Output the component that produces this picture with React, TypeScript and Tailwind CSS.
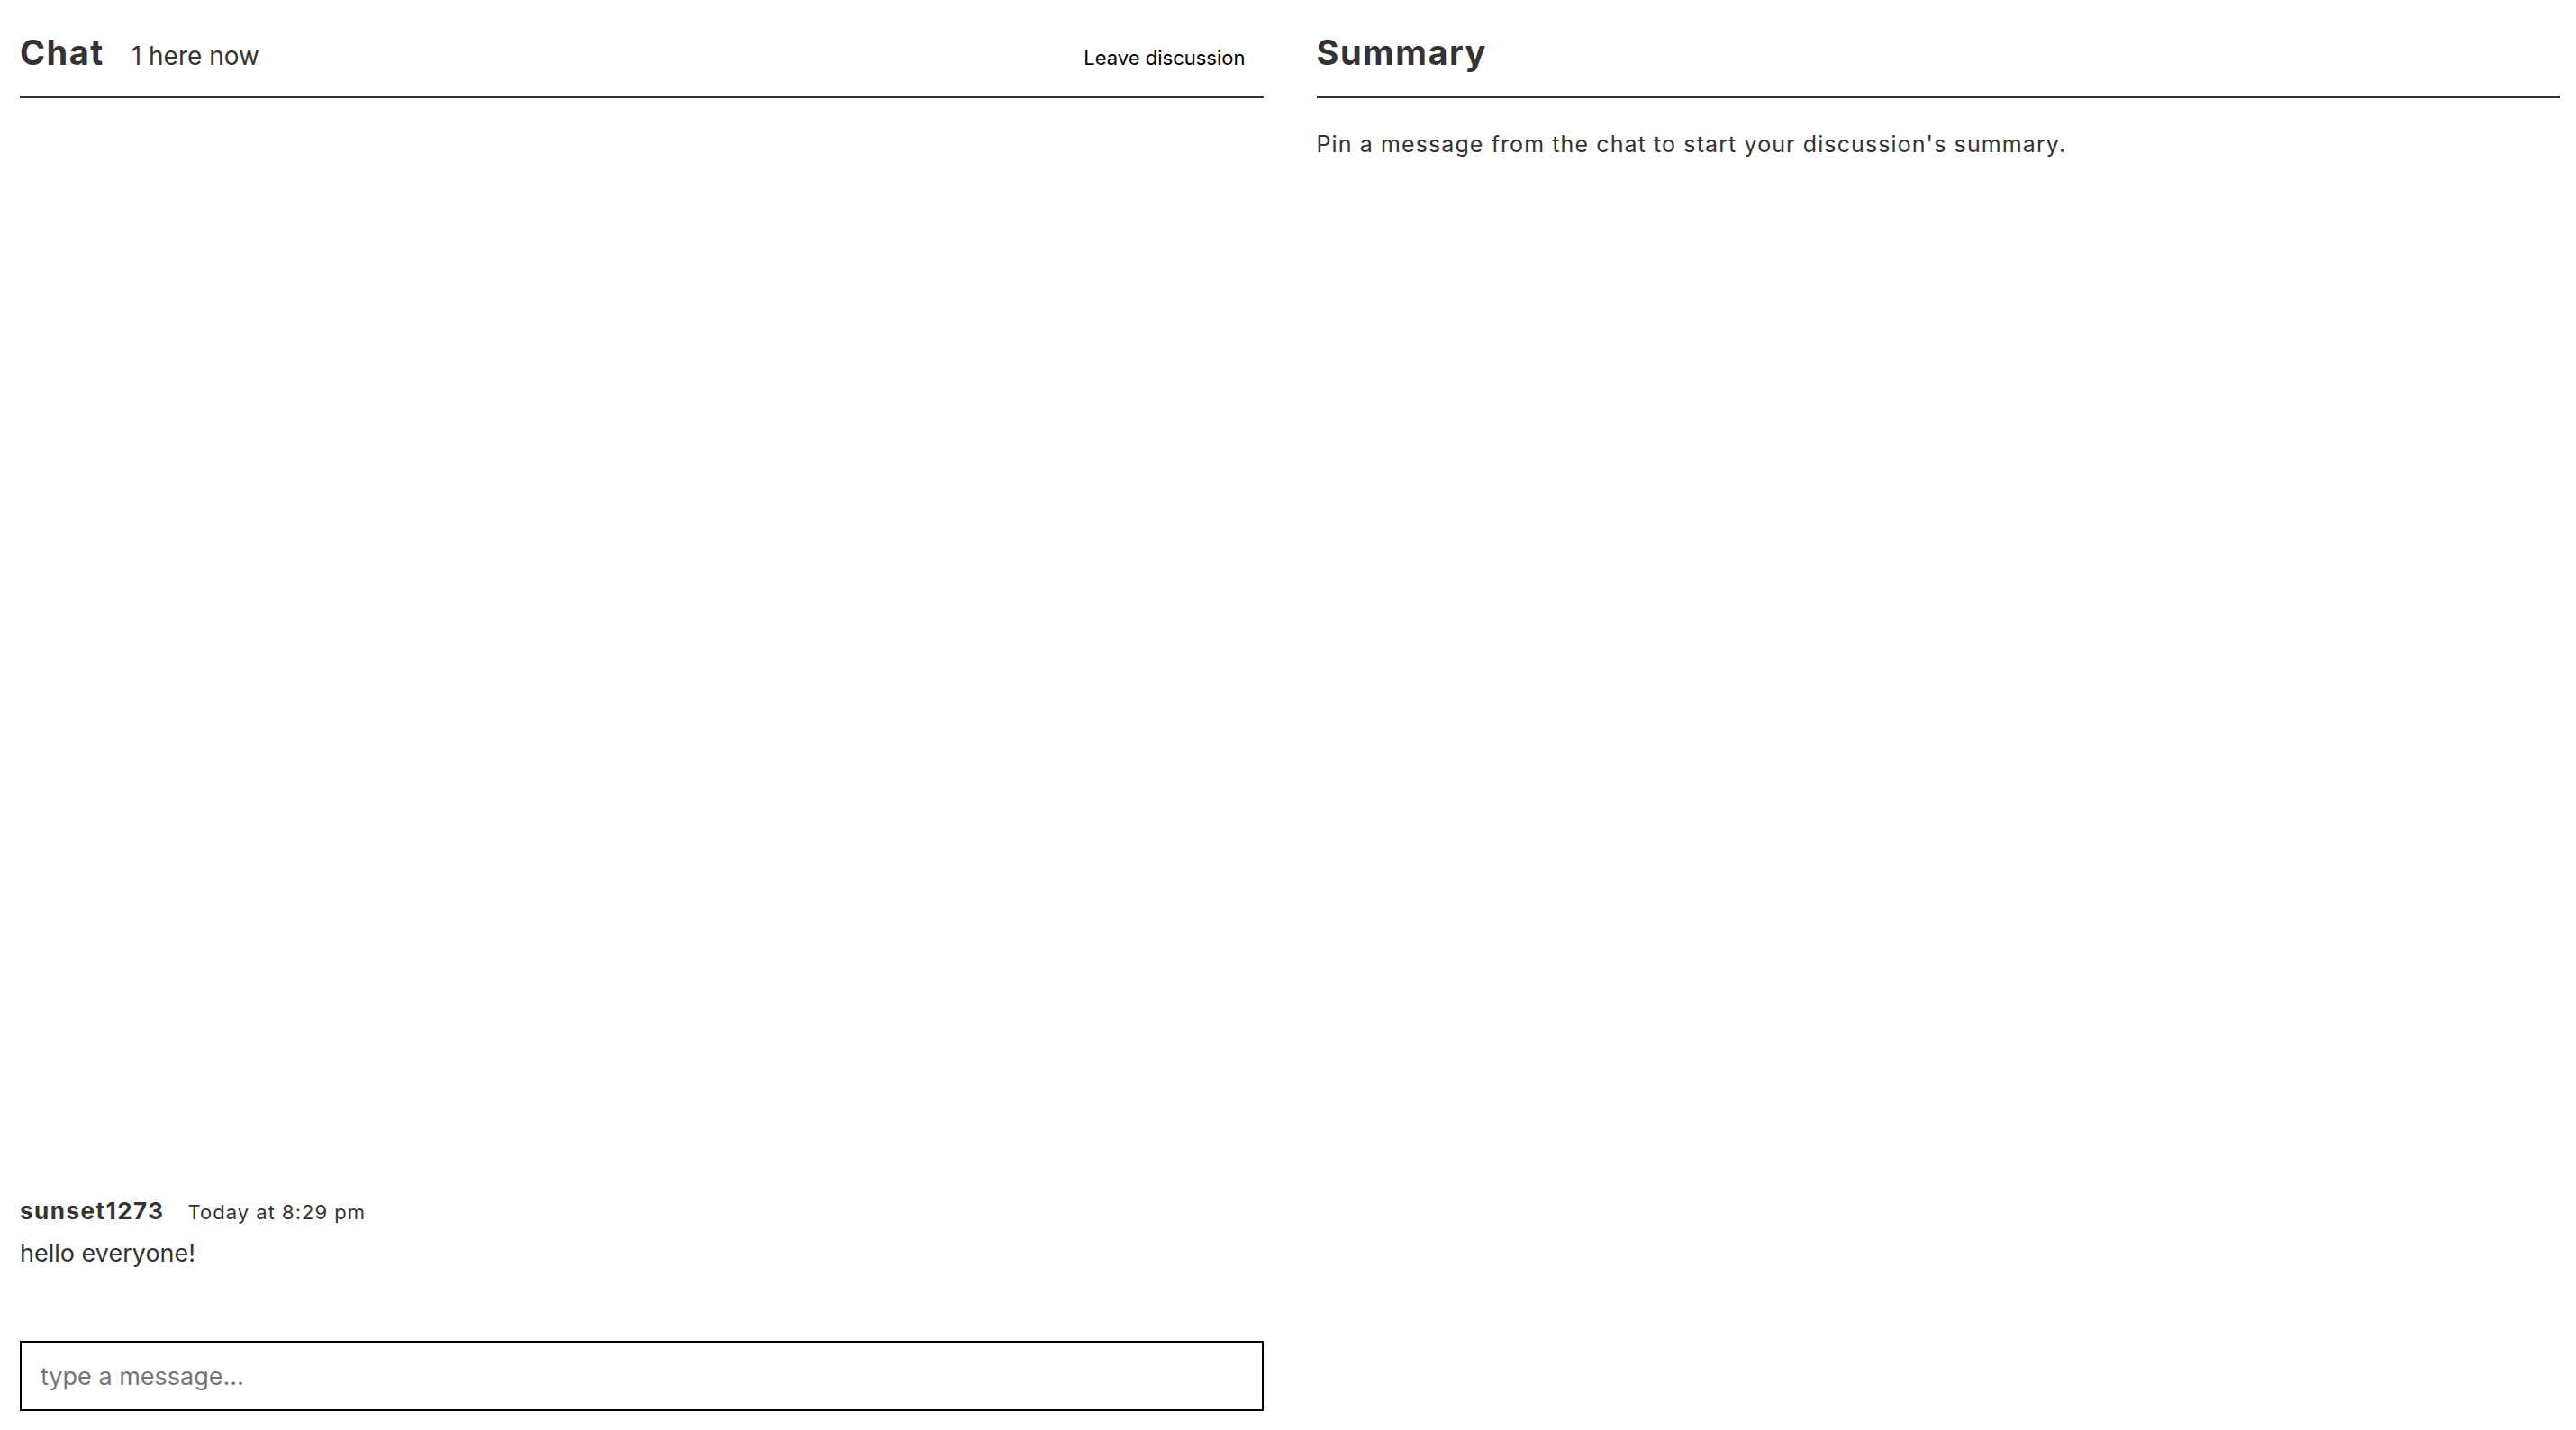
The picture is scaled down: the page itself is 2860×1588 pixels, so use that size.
import React from "react";

export default function App() {
  return (
    <div
      className="flex h-[1588px] w-full bg-white pl-[22px] pr-[18px] gap-[59px] text-[#333]"
      style={{ fontFamily: "Inter, 'Noto Sans', sans-serif" }}
    >
      <section className="flex flex-1 flex-col min-w-0">
        <header className="flex items-baseline border-b-2 border-[#333] pt-[35px] pb-[26px]">
          <h1 className="text-[38px] leading-[46px] font-bold tracking-[1.5px]">Chat</h1>
          <span className="ml-[30px] text-[28px] leading-none">1 here now</span>
          <button className="ml-auto px-[20px] text-[22px] leading-none text-black">Leave discussion</button>
        </header>
        <div className="flex flex-1 flex-col justify-end">
          <div className="mb-[77px]">
            <div className="flex items-baseline leading-[34px]">
              <span className="text-[26px] font-bold tracking-[1.5px]">sunset1273</span>
              <span className="ml-[26px] text-[22px] tracking-[1px]">Today at 8:29 pm</span>
            </div>
            <p className="mt-[9px] text-[27px] leading-[40px]">hello everyone!</p>
          </div>
        </div>
        <div className="pb-[21px]">
          <input
            type="text"
            placeholder="type a message..."
            className="block h-[78px] w-full border-2 border-black px-[21px] text-[27px] text-[#333] placeholder:text-[#757575] outline-none"
          />
        </div>
      </section>
      <section className="flex flex-1 flex-col min-w-0">
        <header className="flex items-baseline border-b-2 border-[#333] pt-[35px] pb-[26px]">
          <h1 className="text-[38px] leading-[46px] font-bold tracking-[1.5px]">Summary</h1>
        </header>
        <p className="mt-[33px] text-[25px] leading-[36px] tracking-[1.1px]">
          Pin a message from the chat to start your discussion's summary.
        </p>
      </section>
    </div>
  );
}
